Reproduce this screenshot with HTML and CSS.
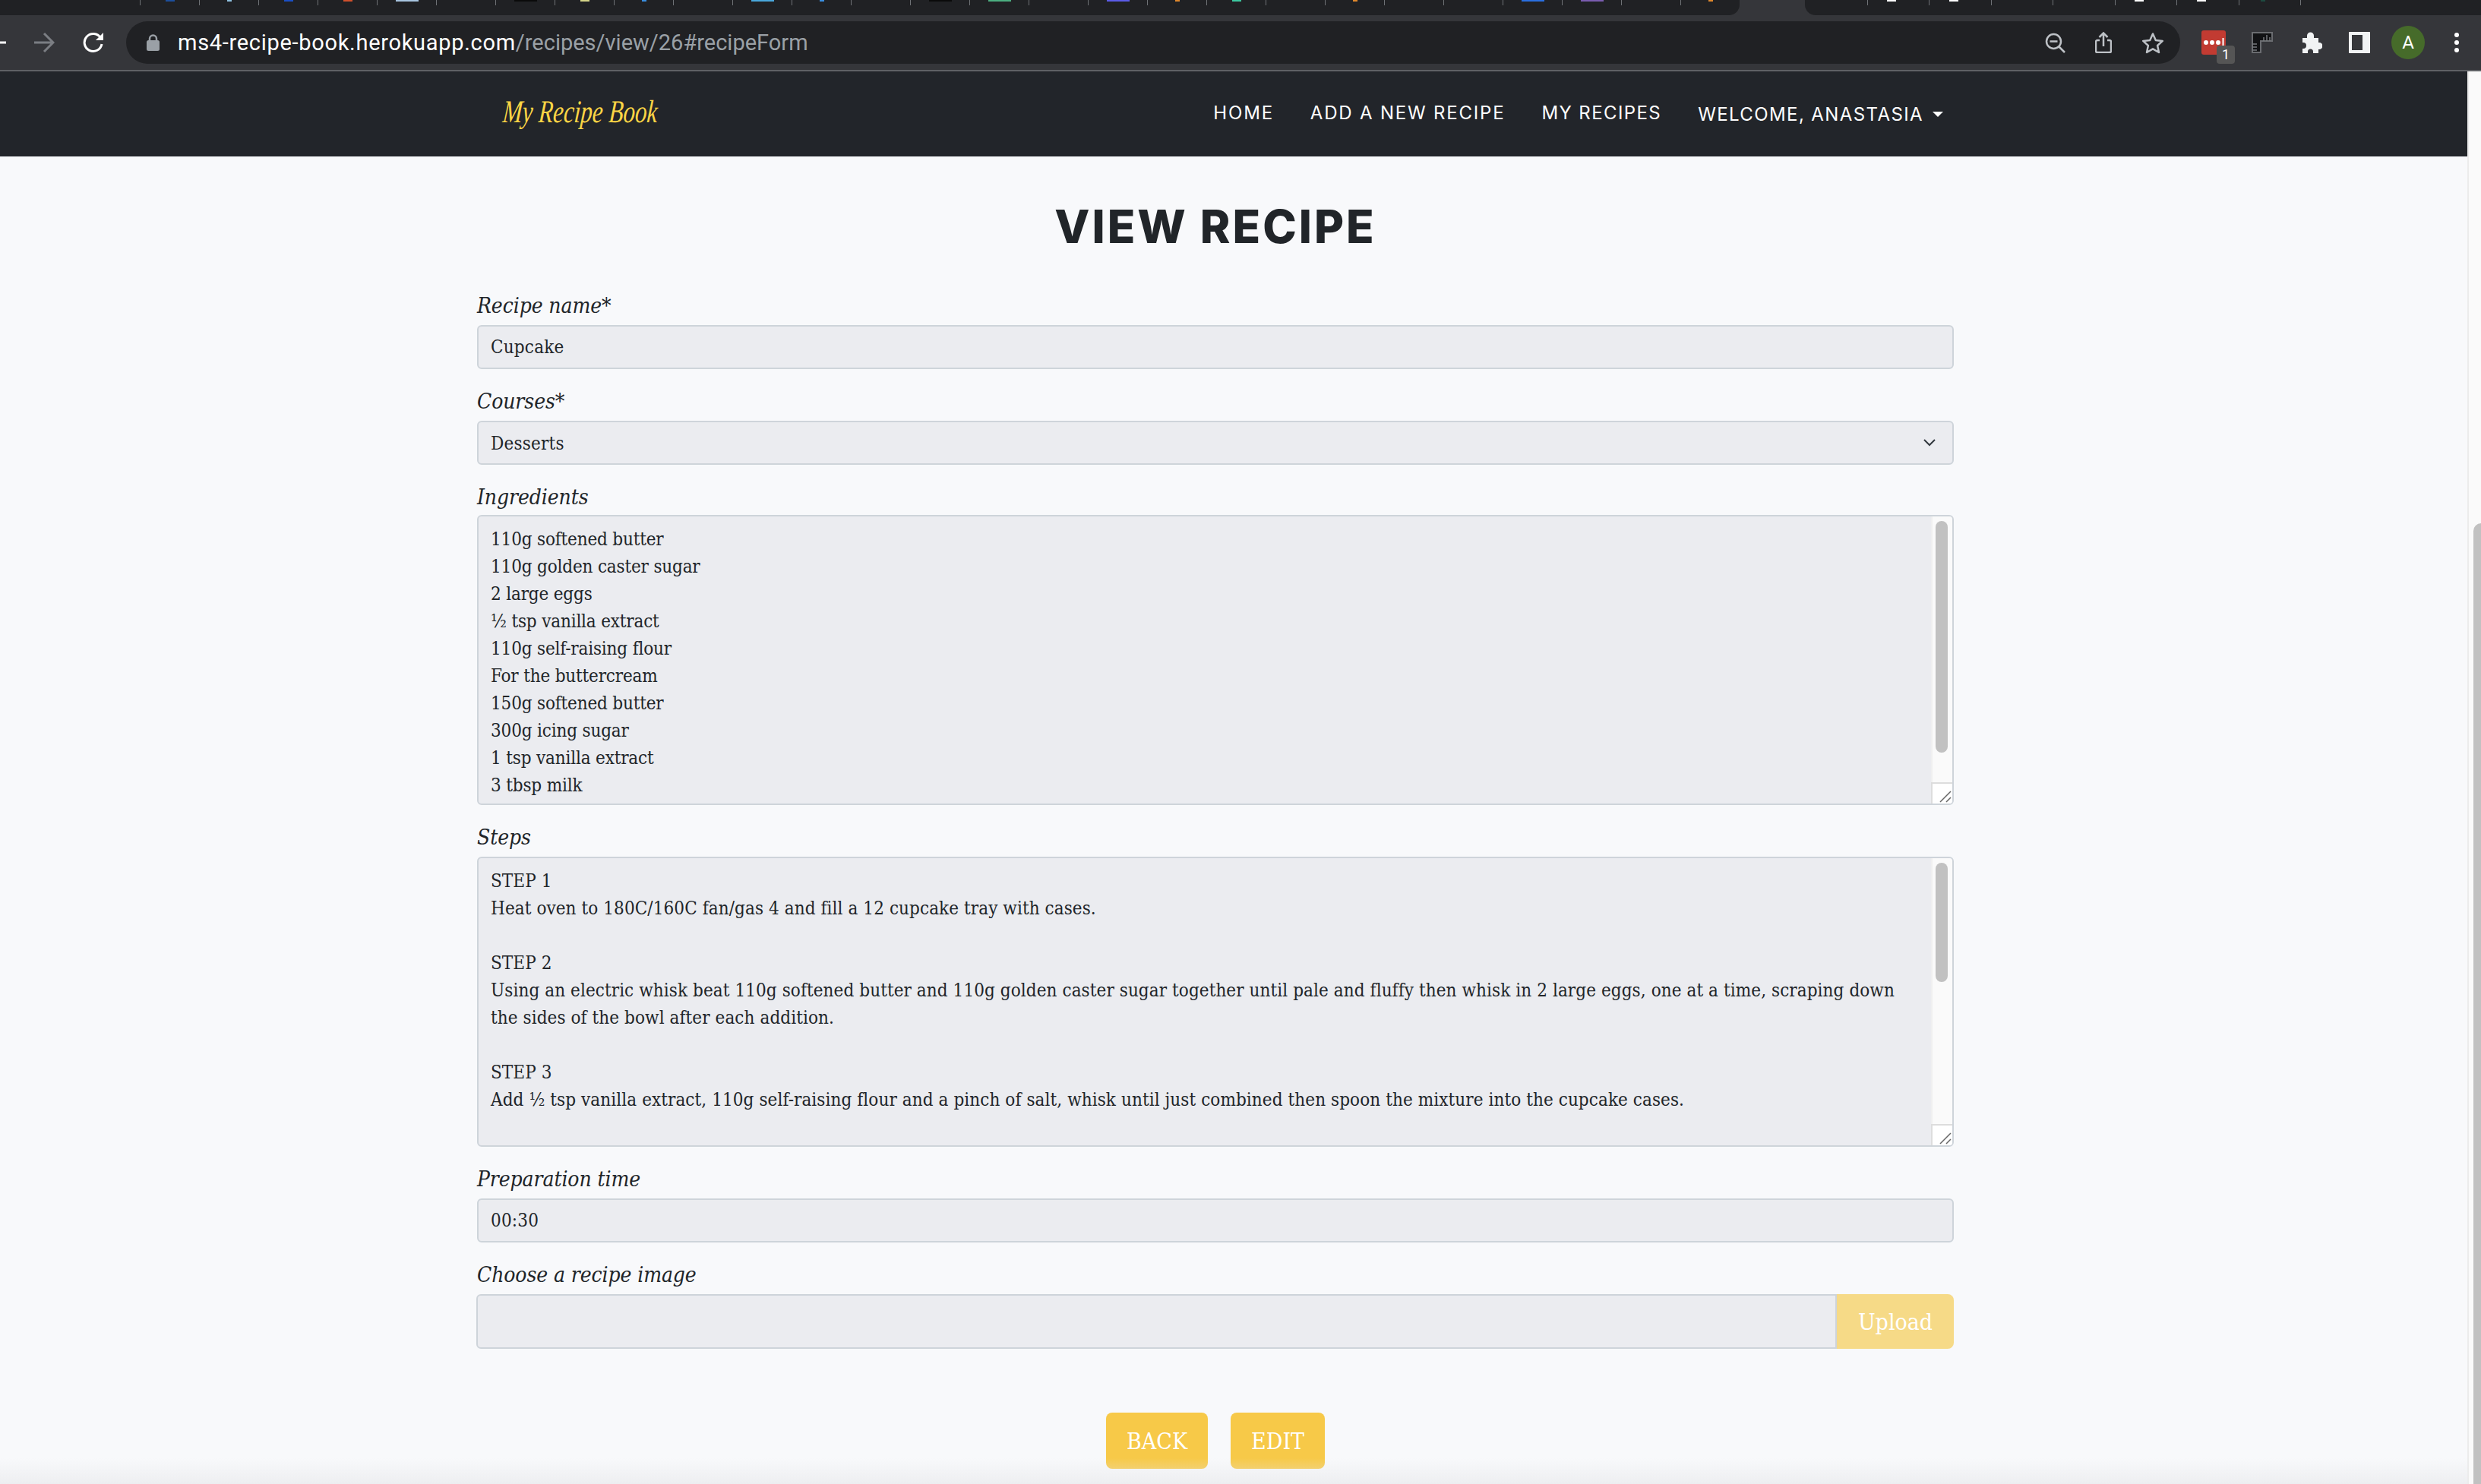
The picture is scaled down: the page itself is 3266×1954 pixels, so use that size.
FILE: index.html
```html
<!DOCTYPE html>
<html lang="en">
  <head>
    <meta charset="utf-8">
    <title>View recipe</title>
    <link rel="stylesheet" href="styles.css">
  </head>
  <body>
    <!-- browser chrome -->
    <div class="tabstrip">
      <div class="tabs tabs-left">
        <div class="tab"></div>
        <div class="tab"><i class="fav fav-navy"></i></div>
        <div class="tab"><i class="fav fav-sky fav-small"></i></div>
        <div class="tab"><i class="fav fav-blue"></i></div>
        <div class="tab"><i class="fav fav-red"></i></div>
        <div class="tab"><i class="fav fav-pale fav-wide"></i></div>
        <div class="tab"></div>
        <div class="tab"><i class="fav fav-black fav-wide"></i></div>
        <div class="tab"><i class="fav fav-yellow"></i></div>
        <div class="tab"><i class="fav fav-azure fav-small"></i></div>
        <div class="tab"></div>
        <div class="tab"><i class="fav fav-cyan fav-wide"></i></div>
        <div class="tab"><i class="fav fav-azure fav-small"></i></div>
        <div class="tab"></div>
        <div class="tab"><i class="fav fav-black fav-wide"></i></div>
        <div class="tab"><i class="fav fav-green fav-wide"></i></div>
        <div class="tab"></div>
        <div class="tab"><i class="fav fav-indigo fav-wide"></i></div>
        <div class="tab"><i class="fav fav-orange fav-small"></i></div>
        <div class="tab"><i class="fav fav-teal"></i></div>
        <div class="tab"></div>
        <div class="tab"><i class="fav fav-orange fav-small"></i></div>
        <div class="tab"></div>
        <div class="tab"></div>
        <div class="tab"><i class="fav fav-royal fav-wide"></i></div>
        <div class="tab"><i class="fav fav-purple fav-wide"></i></div>
        <div class="tab"></div>
        <div class="tab tab-last"><i class="fav fav-orange fav-small"></i></div>
      </div>
      <div class="tabs tabs-right">
        <div class="tab"></div>
        <div class="tab"><i class="fav fav-white"></i></div>
        <div class="tab"><i class="fav fav-white"></i></div>
        <div class="tab"></div>
        <div class="tab"></div>
        <div class="tab"><i class="fav fav-white"></i></div>
        <div class="tab"><i class="fav fav-white"></i></div>
        <div class="tab"><i class="fav fav-dark fav-small"></i></div>
      </div>
    </div>

    <div class="toolbar">
      <svg class="ico-back" viewBox="0 0 8 4"><path d="M0 2h8" stroke="#fff" stroke-width="3"/></svg>
      <svg class="ico-forward" viewBox="0 0 28 26" fill="none" stroke="#7b7e83" stroke-width="3"><path d="M1 13h25M14 1l12 12-12 12"/></svg>
      <svg class="ico-reload" viewBox="0 0 28 28" fill="none"><path d="M23.500 8A11.500 11.500 0 1 0 25 16" stroke="#fff" stroke-width="3"/><path d="M27 1v10H17z" fill="#fff"/></svg>
      <div class="omnibox">
        <svg class="ico-lock" viewBox="0 0 17 22"><path d="M4 9V6a4.500 4.500 0 0 1 9 0v3" fill="none" stroke="#9aa0a6" stroke-width="2.500"/><rect y="8" width="17" height="14" rx="2.500" fill="#9aa0a6"/></svg>
        <div class="url">ms4-recipe-book.herokuapp.com<span>/recipes/view/26#recipeForm</span></div>
        <svg class="ico-zoom" viewBox="0 0 27 27" fill="none" stroke="#bdc1c6" stroke-width="2.500"><circle cx="11.500" cy="11.500" r="9.500"/><path d="M6.500 11.500h10M18 18l8 8"/></svg>
        <svg class="ico-share" viewBox="0 0 22 28" fill="none" stroke="#bdc1c6" stroke-width="2.500"><path d="M6 11H3a2 2 0 0 0-2 2v12a2 2 0 0 0 2 2h16a2 2 0 0 0 2-2V13a2 2 0 0 0-2-2h-3M11 19V2M5.500 7L11 1.500 16.500 7"/></svg>
        <svg class="ico-star" viewBox="0 0 30 29" fill="none" stroke="#bdc1c6" stroke-width="2.500" stroke-linejoin="round"><path d="M15 2.500l3.800 8.400 9 1-6.700 6.100 1.900 9L15 22.400 7 27l1.900-9-6.700-6.100 9-1z"/></svg>
      </div>
      <div class="ext ext-pass">
        <svg viewBox="0 0 32 32"><rect width="32" height="32" rx="3" fill="#c23b32"/><circle cx="6" cy="16" r="3" fill="#fff"/><circle cx="14" cy="16" r="3" fill="#fff"/><circle cx="22" cy="16" r="3" fill="#fff"/><path d="M28.500 10v12" stroke="#fff" stroke-width="2"/></svg>
        <span class="badge">1</span>
      </div>
      <svg class="ico-ruler" viewBox="0 0 28 28"><path d="M0 0h28v12H12v16H0z" fill="#111214"/><path d="M1 1h26v11H12v15H1z" fill="none" stroke="#6a6c70" stroke-width="2"/><path d="M16 12V7M20 12V4M24 12V7M1 16h6M1 20h6M1 24h6" stroke="#77797d" stroke-width="1.500"/></svg>
      <svg class="ico-puzzle" viewBox="0 0 29 28"><path d="M3 8h6V5a4.500 4.500 0 0 1 9 0v3h6v6h1a4.500 4.500 0 0 1 0 9h-1v5h-7v-2a3.500 3.500 0 0 0-7 0v2H3v-6h1a4 4 0 0 0 0-8H3z" fill="#f1f3f4"/></svg>
      <div class="ico-panel"></div>
      <div class="avatar">A</div>
      <svg class="ico-menu" viewBox="0 0 6 26"><circle cx="3" cy="3" r="3" fill="#fff"/><circle cx="3" cy="13" r="3" fill="#fff"/><circle cx="3" cy="23" r="3" fill="#fff"/></svg>
    </div>

    <div class="viewport">
      <div class="page">
        <nav class="navbar">
          <a class="brand">My Recipe Book</a>
          <ul class="nav-links">
            <li>HOME</li>
            <li>ADD A NEW RECIPE</li>
            <li class="nav-mine">MY RECIPES</li>
            <li class="nav-user">WELCOME, ANASTASIA<i class="caret"></i></li>
          </ul>
        </nav>

        <main class="recipe">
          <h1>VIEW RECIPE</h1>
          <form id="recipeForm">
            <div class="field">
              <label for="name">Recipe name*</label>
              <input id="name" class="control" type="text" value="Cupcake" readonly>
            </div>
            <div class="field">
              <label for="course">Courses*</label>
              <div class="select-wrap">
                <select id="course" class="control" disabled>
                  <option>Desserts</option>
                </select>
                <svg class="chevron" viewBox="0 0 16 10" fill="none" stroke="#343a40" stroke-width="2"><path d="M1 1l7 7 7-7"/></svg>
              </div>
            </div>
            <div class="field field-tight">
              <label for="ingredients">Ingredients</label>
              <div class="area-wrap">
                <textarea id="ingredients" class="area" readonly>110g softened butter
110g golden caster sugar
2 large eggs
½ tsp vanilla extract
110g self-raising flour
For the buttercream
150g softened butter
300g icing sugar
1 tsp vanilla extract
3 tbsp milk</textarea>
                <div class="scroll">
                  <div class="scroll-track"><div class="thumb thumb-long"></div></div>
                  <div class="resizer">
                    <svg viewBox="0 0 16 16" fill="none" stroke="#666" stroke-width="1.500"><path d="M1 15L15 1M9 15l6-6"/></svg>
                  </div>
                </div>
              </div>
            </div>
            <div class="field">
              <label for="steps">Steps</label>
              <div class="area-wrap">
                <textarea id="steps" class="area area-steps" readonly>STEP 1
Heat oven to 180C/160C fan/gas 4 and fill a 12 cupcake tray with cases.

STEP 2
Using an electric whisk beat 110g softened butter and 110g golden caster sugar together until pale and fluffy then whisk in 2 large eggs, one at a time, scraping down the sides of the bowl after each addition.

STEP 3
Add ½ tsp vanilla extract, 110g self-raising flour and a pinch of salt, whisk until just combined then spoon the mixture into the cupcake cases.</textarea>
                <div class="scroll">
                  <div class="scroll-track"><div class="thumb thumb-short"></div></div>
                  <div class="resizer">
                    <svg viewBox="0 0 16 16" fill="none" stroke="#666" stroke-width="1.500"><path d="M1 15L15 1M9 15l6-6"/></svg>
                  </div>
                </div>
              </div>
            </div>
            <div class="field">
              <label for="prep">Preparation time</label>
              <input id="prep" class="control" type="text" value="00:30" readonly>
            </div>
            <div class="field">
              <label for="image">Choose a recipe image</label>
              <div class="upload">
                <input id="image" class="control" type="text" readonly>
                <button type="button" class="upload-btn">Upload</button>
              </div>
            </div>
            <div class="actions">
              <button type="button" class="btn">BACK</button>
              <button type="button" class="btn">EDIT</button>
            </div>
          </form>
        </main>
      </div>
      <div class="page-scrollbar"><div class="page-thumb"></div></div>
    </div>
  </body>
</html>
```

FILE: styles.css
```css
html, body {
  margin: 0;
  height: 1954px;
  overflow: hidden;
}
body {
  display: flex;
  flex-direction: column;
  background: #f8f9fb;
  color: #212529;
  font-family: "DejaVu Serif Condensed", "DejaVu Serif", serif;
}

/* tabs */
.tabstrip {
  display: flex;
  height: 20px;
  flex: none;
  background: #35363a;
  justify-content: space-between;
}
.tabs {
  display: flex;
  background: #202124;
}
.tabs-left {
  width: 2290px;
  padding-left: 107px;
  box-sizing: border-box;
  border-bottom-right-radius: 14px;
}
.tabs-right {
  width: 890px;
  padding-left: 1px;
  box-sizing: border-box;
  border-bottom-left-radius: 14px;
}
.tab {
  width: 78px;
  height: 7px;
  flex: none;
  box-sizing: border-box;
  border-right: 1px solid #6f7276;
  display: flex;
  justify-content: center;
}
.tabs-right .tab {
  width: 81.500px;
  padding-right: 17px;
}
.tab-last {
  border-right: 0;
}
.fav {
  display: block;
  width: 12px;
  height: 2px;
}
.fav-wide { width: 30px; }
.fav-small { width: 6px; }
.fav-navy { background: #1c4f9c; }
.fav-sky { background: #8fc1e0; }
.fav-blue { background: #1a4fc4; }
.fav-red { background: #d0502c; }
.fav-pale { background: #a8c4e0; }
.fav-black { background: #0a0a0a; }
.fav-yellow { background: #d4d488; }
.fav-azure { background: #3a8fe0; }
.fav-cyan { background: #4aa8dc; }
.fav-green { background: #4caf80; }
.fav-indigo { background: #5b5be8; }
.fav-orange { background: #e0882c; }
.fav-teal { background: #3cc8a0; }
.fav-royal { background: #2a6fe0; }
.fav-purple { background: #7a5cb0; }
.fav-white { background: #fff; }
.fav-dark { background: #1d4a40; }

/* toolbar */
.toolbar {
  display: flex;
  align-items: center;
  height: 72px;
  flex: none;
  background: #35363a;
  border-bottom: 2px solid #5f6165;
}
.toolbar svg {
  flex: none;
}
.ico-back { width: 8px; height: 4px; }
.ico-forward { width: 28px; height: 26px; margin-left: 36px; }
.ico-reload { width: 28px; height: 28px; margin-left: 37px; }
.omnibox {
  display: flex;
  align-items: center;
  width: 2704px;
  height: 56px;
  margin-left: 29px;
  box-sizing: border-box;
  padding-left: 27px;
  background: #202124;
  border-radius: 28px;
}
.ico-lock { width: 17px; height: 22px; }
.url {
  flex: 1;
  margin-left: 24px;
  font: 29px Roboto, sans-serif;
  color: #fff;
  letter-spacing: 0.7px;
}
.url span {
  color: #9aa0a6;
  letter-spacing: 0;
}
.ico-zoom { width: 27px; height: 27px; }
.ico-share { width: 22px; height: 28px; margin-left: 39px; }
.ico-star { width: 30px; height: 29px; margin-left: 39px; margin-right: 21px; }
.ext-pass {
  position: relative;
  width: 32px;
  height: 32px;
  margin-left: 28px;
}
.ext-pass svg {
  display: block;
  width: 32px;
  height: 32px;
}
.badge {
  position: absolute;
  left: 20px;
  top: 20px;
  width: 24px;
  height: 24px;
  background: #555;
  border-radius: 4px;
  color: #fff;
  font: 18px/24px Roboto, sans-serif;
  text-align: center;
}
.ico-ruler { width: 28px; height: 28px; margin-left: 34px; }
.ico-puzzle { width: 29px; height: 28px; margin-left: 36px; }
.ico-panel {
  width: 28px;
  height: 28px;
  margin-left: 35px;
  box-sizing: border-box;
  background: #35363a;
  border: 4px solid #f1f3f4;
  border-right-width: 10px;
}
.avatar {
  width: 44px;
  height: 44px;
  margin-left: 28px;
  border-radius: 50%;
  background: #466b2a;
  color: #fff;
  font: 24px/44px Roboto, sans-serif;
  text-align: center;
}
.ico-menu { width: 6px; height: 26px; margin-left: 39px; }

/* page */
.viewport {
  display: flex;
  flex: 1;
  min-height: 0;
}
.page {
  position: relative;
  flex: 1;
  overflow: hidden;
}
.page::after {
  content: "";
  position: absolute;
  left: 0;
  right: 0;
  bottom: 0;
  height: 34px;
  background: linear-gradient(rgba(230, 231, 234, 0), rgba(230, 231, 234, 0.6));
  pointer-events: none;
}
.page-scrollbar {
  width: 18px;
  flex: none;
  box-sizing: border-box;
  background: #fafafa;
  border-left: 2px solid #ececec;
  padding: 595px 0 0 6px;
}
.page-thumb {
  height: 100%;
  background: #c1c1c1;
  border-radius: 10px 0 0 0;
}

.navbar {
  display: flex;
  align-items: center;
  justify-content: space-between;
  height: 112px;
  box-sizing: border-box;
  padding: 0 690px 2px 662px;
  background: #22252a;
}
.brand {
  margin-bottom: 4px;
  color: #fbd545;
  font: italic 42px "Liberation Serif", serif;
  transform: scaleX(0.74) skewX(-6deg);
  transform-origin: left center;
}
.nav-links {
  display: flex;
  gap: 48px;
  margin: 0;
  padding: 0;
  list-style: none;
  color: #fff;
  font: 24px Inter, sans-serif;
  letter-spacing: 1.8px;
}
.nav-mine {
  letter-spacing: 1.4px;
}
.nav-user {
  padding-top: 2px;
  letter-spacing: 1.4px;
}
.caret {
  display: inline-block;
  margin-left: 12px;
  border-top: 7px solid #fff;
  border-left: 7px solid transparent;
  border-right: 7px solid transparent;
  vertical-align: 5px;
}

.recipe {
  width: 1944px;
  margin-left: 628px;
  padding-top: 56px;
}
h1 {
  margin: 0 0 50px;
  font: 800 60px/72px Inter, sans-serif;
  letter-spacing: 3px;
  text-align: center;
}
.field {
  margin-top: 24px;
}
label {
  display: block;
  height: 36px;
  margin-bottom: 8px;
  font-size: 28px;
  line-height: 38px;
  font-style: italic;
  letter-spacing: -0.1px;
}
.field-tight label {
  margin-bottom: 6px;
}
.control,
.area {
  color: #212529;
  font: inherit;
  font-size: 24px;
  line-height: 36px;
  outline: 0;
  opacity: 1;
}
.control {
  display: block;
  width: 100%;
  height: 58px;
  box-sizing: border-box;
  margin: 0;
  padding: 10px 16px;
  background: #ebecf0;
  border: 2px solid #ced4da;
  border-radius: 6px;
  letter-spacing: 0.2px;
  appearance: none;
}
.select-wrap {
  position: relative;
}
.chevron {
  position: absolute;
  right: 24px;
  top: 24px;
  width: 16px;
  height: 10px;
}
.area-wrap {
  display: flex;
  height: 382px;
  box-sizing: border-box;
  background: #ebecf0;
  border: 2px solid #ced4da;
  border-radius: 6px;
  overflow: hidden;
}
.area {
  flex: 1;
  display: block;
  box-sizing: border-box;
  margin: 0;
  padding: 12px 16px 8px;
  background: transparent;
  border: 0;
  letter-spacing: -0.17px;
  overflow: hidden;
  resize: none;
}
.area-steps {
  letter-spacing: 0.08px;
}
.scroll {
  display: flex;
  flex-direction: column;
  width: 28px;
  flex: none;
  background: #fafafa;
}
.scroll-track {
  flex: 1;
  box-sizing: border-box;
  padding: 6px 6px 0 4px;
  border-left: 2px solid #f0f0f0;
}
.thumb {
  width: 16px;
  background: #c1c1c1;
  border-radius: 8px;
}
.thumb-long { height: 305px; }
.thumb-short { height: 157px; }
.resizer {
  display: flex;
  justify-content: flex-end;
  align-items: flex-end;
  height: 28px;
  box-sizing: border-box;
  padding: 0 1px 1px 0;
  background: #fff;
  border-top: 2px solid #ddd;
  border-left: 2px solid #ddd;
}
.resizer svg {
  width: 16px;
  height: 16px;
}
.upload {
  display: flex;
  margin-left: -1px;
}
.upload .control {
  flex: 1;
  width: auto;
  height: 72px;
  border-radius: 6px 0 0 6px;
}
.upload-btn {
  width: 154px;
  height: 72px;
  padding: 0;
  background: #f6da87;
  border: 0;
  border-radius: 0 8px 8px 0;
  color: #fff;
  font: inherit;
  font-size: 30px;
}
.actions {
  display: flex;
  justify-content: center;
  gap: 30px;
  margin-top: 84px;
}
.btn {
  height: 74px;
  padding: 0 27px;
  background: #f7c948;
  border: 0;
  border-radius: 8px;
  color: #fff;
  font: inherit;
  font-size: 30px;
}
```
